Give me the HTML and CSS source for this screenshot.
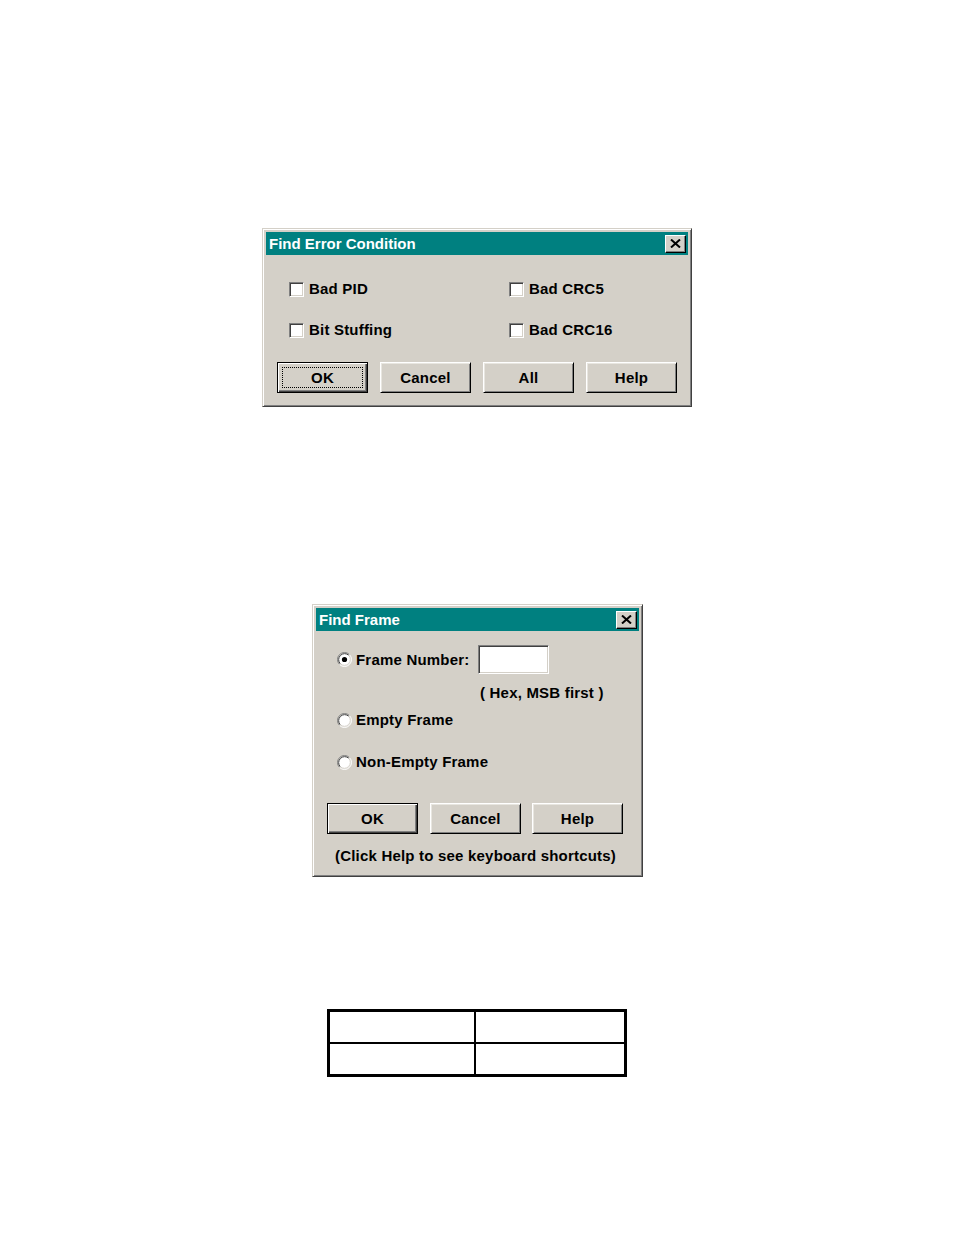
FILE: index.html
```html
<!DOCTYPE html>
<html>
<head>
<meta charset="utf-8">
<title>Find dialogs</title>
<link rel="stylesheet" href="styles.css">
</head>
<body>
<div class="page">

  <div class="dialog dialog-error">
    <div class="titlebar">
      <span class="title">Find Error Condition</span>
      <span class="close-btn"><svg width="11" height="9" viewBox="0 0 11 9"><path d="M1 0.5 L10 8.5 M10 0.5 L1 8.5" stroke="#000" stroke-width="2" fill="none"/></svg></span>
    </div>
    <div class="dialog-body body-error">
      <div class="check-grid">
        <label class="check-row"><span class="checkbox"></span><span class="txt">Bad PID</span></label>
        <label class="check-row"><span class="checkbox"></span><span class="txt">Bad CRC5</span></label>
        <label class="check-row"><span class="checkbox"></span><span class="txt">Bit Stuffing</span></label>
        <label class="check-row"><span class="checkbox"></span><span class="txt">Bad CRC16</span></label>
      </div>
      <div class="btn-row">
        <span class="btn default"><span class="focus">OK</span></span>
        <span class="btn">Cancel</span>
        <span class="btn">All</span>
        <span class="btn">Help</span>
      </div>
    </div>
  </div>

  <div class="dialog dialog-frame">
    <div class="titlebar">
      <span class="title">Find Frame</span>
      <span class="close-btn"><svg width="11" height="9" viewBox="0 0 11 9"><path d="M1 0.5 L10 8.5 M10 0.5 L1 8.5" stroke="#000" stroke-width="2" fill="none"/></svg></span>
    </div>
    <div class="dialog-body body-frame">
      <div class="frame-row">
        <label class="radio-row radio-first">
          <svg class="radio" width="15" height="15" viewBox="0 0 15 15">
            <circle cx="7.5" cy="7.5" r="6.5" fill="#fff"/>
            <path d="M2.55 12.45 A7 7 0 0 1 12.45 2.55" stroke="#808080" stroke-width="1" fill="none"/>
            <path d="M12.45 2.55 A7 7 0 0 1 2.55 12.45" stroke="#ffffff" stroke-width="1" fill="none"/>
            <path d="M3.26 11.74 A6 6 0 0 1 11.74 3.26" stroke="#404040" stroke-width="1" fill="none"/>
            <path d="M11.74 3.26 A6 6 0 0 1 3.26 11.74" stroke="#d4d0c8" stroke-width="1" fill="none"/>
            <circle cx="7.5" cy="7.5" r="2.6" fill="#000"/>
          </svg>
          <span class="txt">Frame Number:</span>
        </label>
        <span class="field"></span>
      </div>
      <div class="hint">( Hex, MSB first )</div>
      <label class="radio-row radio-empty">
        <svg class="radio" width="15" height="15" viewBox="0 0 15 15">
          <circle cx="7.5" cy="7.5" r="6.5" fill="#fff"/>
          <path d="M2.55 12.45 A7 7 0 0 1 12.45 2.55" stroke="#808080" stroke-width="1" fill="none"/>
          <path d="M12.45 2.55 A7 7 0 0 1 2.55 12.45" stroke="#ffffff" stroke-width="1" fill="none"/>
          <path d="M3.26 11.74 A6 6 0 0 1 11.74 3.26" stroke="#404040" stroke-width="1" fill="none"/>
          <path d="M11.74 3.26 A6 6 0 0 1 3.26 11.74" stroke="#d4d0c8" stroke-width="1" fill="none"/>
        </svg>
        <span class="txt">Empty Frame</span>
      </label>
      <label class="radio-row radio-nonempty">
        <svg class="radio" width="15" height="15" viewBox="0 0 15 15">
          <circle cx="7.5" cy="7.5" r="6.5" fill="#fff"/>
          <path d="M2.55 12.45 A7 7 0 0 1 12.45 2.55" stroke="#808080" stroke-width="1" fill="none"/>
          <path d="M12.45 2.55 A7 7 0 0 1 2.55 12.45" stroke="#ffffff" stroke-width="1" fill="none"/>
          <path d="M3.26 11.74 A6 6 0 0 1 11.74 3.26" stroke="#404040" stroke-width="1" fill="none"/>
          <path d="M11.74 3.26 A6 6 0 0 1 3.26 11.74" stroke="#d4d0c8" stroke-width="1" fill="none"/>
        </svg>
        <span class="txt">Non-Empty Frame</span>
      </label>
      <div class="btn-row btn-row-frame">
        <span class="btn default">OK</span>
        <span class="btn">Cancel</span>
        <span class="btn">Help</span>
      </div>
      <div class="footnote">(Click Help to see keyboard shortcuts)</div>
    </div>
  </div>

  <table class="grid-table">
    <tr><td></td><td></td></tr>
    <tr><td></td><td></td></tr>
  </table>

</div>
</body>
</html>
```

FILE: styles.css
```css
html, body {
  margin: 0;
  padding: 0;
  background: #ffffff;
}

.page {
  display: flex;
  flex-direction: column;
  align-items: flex-start;
  font-family: "Liberation Sans", Arial, sans-serif;
  font-weight: bold;
  font-size: 15px;
  letter-spacing: 0.2px;
  color: #000;
}

/* ---------- window frame ---------- */
.dialog {
  box-sizing: border-box;
  background: #d4d0c8;
  border: 1px solid;
  border-color: #d4d0c8 #404040 #404040 #d4d0c8;
  box-shadow: inset 1px 1px #ffffff, inset -1px -1px #808080;
  padding: 3px;
}

.dialog-error {
  margin-top: 228px;
  margin-left: 262px;
  width: 430px;
  height: 179px;
}

.dialog-frame {
  margin-top: 197px;
  margin-left: 312px;
  width: 331px;
  height: 273px;
}

.titlebar {
  height: 23px;
  background: #008080;
  display: flex;
  align-items: center;
  justify-content: space-between;
  padding: 0 2px 0 3px;
}

.title {
  color: #ffffff;
  font-size: 15px;
  letter-spacing: 0;
  line-height: 23px;
}

.close-btn {
  box-sizing: border-box;
  width: 21px;
  height: 18px;
  background: #d4d0c8;
  border: 1px solid;
  border-color: #ffffff #000000 #000000 #ffffff;
  box-shadow: inset -1px -1px #808080;
  display: flex;
  align-items: center;
  justify-content: center;
  padding-bottom: 1px;
}

/* ---------- checkboxes ---------- */
.body-error {
  padding: 26px 0 0 0;
}

.check-grid {
  display: grid;
  grid-template-columns: 220px auto;
  row-gap: 25px;
  padding-left: 23px;
}

.check-row {
  display: flex;
  align-items: center;
  height: 16px;
}

.checkbox {
  box-sizing: border-box;
  width: 15px;
  height: 15px;
  background: #ffffff;
  border: 1px solid;
  border-color: #808080 #ffffff #ffffff #808080;
  box-shadow: inset 1px 1px #404040, inset -1px -1px #d4d0c8;
  margin-right: 5px;
  flex: none;
}

.txt {
  line-height: 16px;
  white-space: nowrap;
}

/* ---------- buttons ---------- */
.btn-row {
  display: flex;
  gap: 12px;
  margin-top: 24px;
  padding-left: 11px;
}

.btn {
  box-sizing: border-box;
  width: 91px;
  height: 31px;
  display: flex;
  align-items: center;
  justify-content: center;
  background: #d4d0c8;
  border: 1px solid;
  border-color: #ffffff #000000 #000000 #ffffff;
  box-shadow: inset 1px 1px #e8e6e0, inset -1px -1px #808080;
  line-height: 16px;
}

.btn.default {
  border: 1px solid #000000;
  box-shadow: inset 1px 1px #ffffff, inset -1px -1px #404040, inset -2px -2px #808080;
}

.focus {
  box-sizing: border-box;
  width: 81px;
  height: 21px;
  border: 1px dotted #000000;
  display: flex;
  align-items: center;
  justify-content: center;
}

/* ---------- find frame ---------- */
.body-frame {
  padding: 14px 0 0 21px;
}

.frame-row {
  display: flex;
  align-items: center;
  height: 29px;
}

.radio-row {
  display: flex;
  align-items: center;
  height: 16px;
}

.radio {
  flex: none;
  margin-right: 4px;
}

.radio-first {
  width: 141px;
}

.field {
  box-sizing: border-box;
  width: 71px;
  height: 29px;
  background: #ffffff;
  border: 1px solid;
  border-color: #808080 #ffffff #ffffff #808080;
  box-shadow: inset 1px 1px #404040, inset -1px -1px #d4d0c8;
}

.hint {
  margin-top: 11px;
  padding-left: 143px;
  line-height: 16px;
  height: 16px;
}

.radio-empty {
  margin-top: 11px;
}

.radio-nonempty {
  margin-top: 26px;
}

.btn-row-frame {
  margin-top: 33px;
  padding-left: 0;
  margin-left: -10px;
  gap: 12px;
}

.btn-row-frame .btn:nth-child(3) {
  margin-left: -1px;
}

.footnote {
  margin-top: 14px;
  margin-left: -2px;
  line-height: 16px;
  height: 16px;
  white-space: nowrap;
}

/* ---------- table ---------- */
.grid-table {
  margin-top: 132px;
  margin-left: 327px;
  width: 300px;
  height: 68px;
  border-collapse: collapse;
  border: 3px solid #000000;
  table-layout: fixed;
}

.grid-table td {
  border: 2px solid #000000;
  padding: 0;
}

.grid-table td:first-child {
  width: 144px;
}
```
